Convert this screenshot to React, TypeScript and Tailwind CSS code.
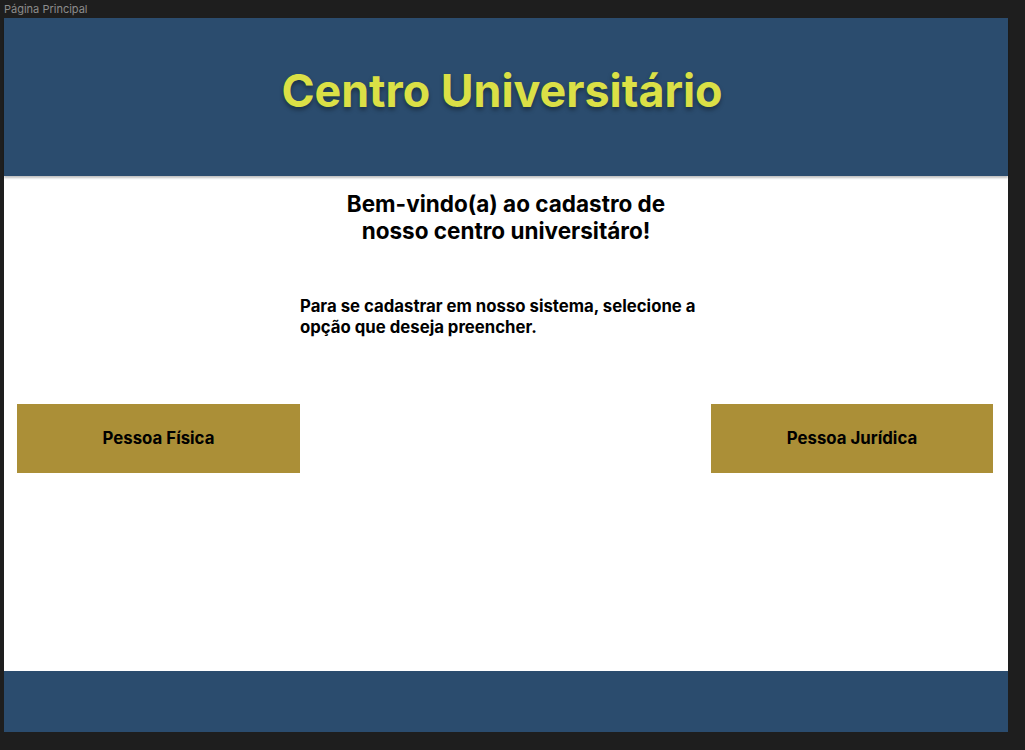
export default function App() {
  return (
    <div className="min-h-[750px] w-full bg-[#1e1e1e] font-['Inter',sans-serif]">
      {/* frame label */}
      <div className="h-[18px] pl-[4px] pt-[3px] text-[11px] leading-[12px] text-[#8c8c8c]">
        Página Principal
      </div>

      {/* frame */}
      <div className="ml-[4px] flex h-[714px] w-[1004px] flex-col bg-white">
        <header className="flex h-[158px] items-center justify-center bg-[#2b4c6e] pb-[10px] shadow-[0_2px_2px_rgba(0,0,0,0.25)]">
          <h1 className="-ml-[8px] text-[44.8px] font-bold text-[#dbe046] [text-shadow:0_3px_4px_rgba(0,0,0,0.35)]">
            Centro Universitário
          </h1>
        </header>

        <main className="flex flex-1 flex-col">
          <h2 className="mt-[14px] text-center text-[22.5px] font-bold leading-[27px] text-black">
            Bem-vindo(a) ao cadastro de
            <br />
            nosso centro universitáro!
          </h2>

          <p className="ml-[296px] mt-[52px] text-[16.75px] font-bold leading-[21px] text-black">
            Para se cadastrar em nosso sistema, selecione a
            <br />
            opção que deseja preencher.
          </p>

          <div className="mt-[66px] flex justify-between pl-[13px] pr-[15px]">
            <button className="flex h-[69px] w-[283px] items-center justify-center bg-[#ab8f37] text-[16.8px] font-bold text-black">
              Pessoa Física
            </button>
            <button className="flex h-[69px] w-[282px] items-center justify-center bg-[#ab8f37] text-[16.8px] font-bold text-black">
              Pessoa Jurídica
            </button>
          </div>
        </main>

        <footer className="h-[61px] bg-[#2b4c6e]" />
      </div>
    </div>
  );
}
